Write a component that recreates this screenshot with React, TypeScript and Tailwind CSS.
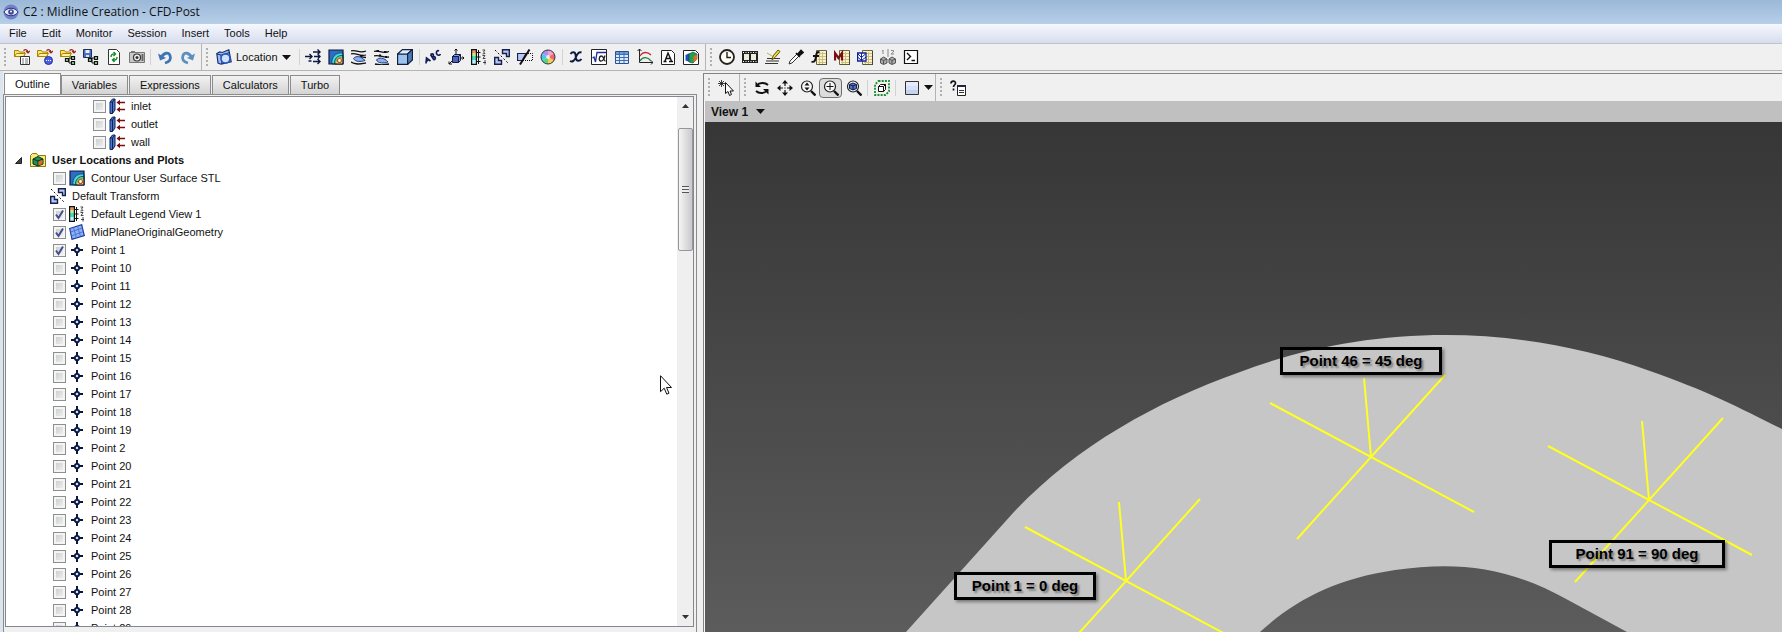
import type { ReactNode } from 'react';

type IconName = keyof typeof glyphs;

const folder = (
  <>
    <path d="M.5 7.500v-6h4l1 1.500h5v4.500z" fill="#ffe36b" stroke="#a88400" />
    <path d="M.5 7.500l2-3h9l-2 3z" fill="#fff2a0" stroke="#a88400" />
    <path d="M9.500 1.500c2-1.500 4-1 4.500 1.500M12 2l2 2 2-2" stroke="#a02020" strokeWidth="1.200" />
  </>
);

const tree = (
  <>
    <path d="M6 11.500h3M9 9v5h2M9 9h2" stroke="#111" />
    <path d="M5.500 9.500h3v3h-3zM11.500 7.500h3v3h-3zM11.500 12.500h3v3h-3z" fill="#8fce8f" stroke="#111" strokeWidth="1.200" />
  </>
);

const calcSheet = (
  <>
    <path d="M5.500 1.500h10v14h-10z" fill="#fbf3c4" stroke="#6b6440" />
    <path d="M7 4.500h8M7 7.500h8M7 10.500h8M7 13.500h8M8.500 3v12M11.500 3v12" stroke="#c9bc88" />
    <path d="M15.500 2v14H6" stroke="#4a4530" />
  </>
);

const lens = (
  <>
    <circle cx="7" cy="6.500" r="5.500" fill="#f8f8f8" stroke="#222" strokeWidth="1.200" />
    <path d="M11 11l4.500 4.500" stroke="#111" strokeWidth="2.400" />
  </>
);

const contour = (
  <>
    <path d="M1 1h14v14H1z" fill="#2f6cc4" />
    <path d="M4 15C3 8 8 3 15 4v11z" fill="#48d4e0" stroke="#0d3c5c" strokeWidth=".8" />
    <path d="M6.500 15C6 10 9.500 6 15 6.500V15z" fill="#58d890" stroke="#0d4030" strokeWidth=".8" />
    <path d="M8 15c-.5-4 2-6.500 7-6V15z" fill="#fbf3a8" stroke="#66600c" strokeWidth=".6" />
    <circle cx="11.500" cy="11.500" r="2" fill="#fff" stroke="#c85010" strokeWidth="1.200" />
    <path d="M1 1h14v14H1z" stroke="#0b1c40" strokeWidth="1.200" />
  </>
);

const transform = (
  <>
    <path d="M.7 8.500h3.800v3h3v3.800H.7zM8.500 .7h6.800v6.800h-2.800v-3h-4z" fill="#b9c7f2" stroke="#16204e" strokeWidth="1.400" />
    <path d="M1 1l14 14" stroke="#111" strokeDasharray="2 2" />
  </>
);

const legend = (
  <>
    <path d="M1 1h4v4H1z" fill="#f09070" />
    <path d="M1 4h4v3H1z" fill="#c8e890" />
    <path d="M1 7h4v4H1z" fill="#48dcb8" />
    <path d="M1 11h4v4H1z" fill="#b8f0ff" />
    <path d="M.6 .6h4.800v14.800H.6z" stroke="#111" strokeWidth="1.200" />
    <path d="M7.500 1v14M5.500 3.500h4M5.500 8h4M5.500 12.500h4" stroke="#111" />
    <path d="M11.500 1h2.500L12.500 3 14 4.500 11.500 5M11.500 6.500H14L12 9.500h2.500M14 11v4.500M12 13.500h3" stroke="#333" strokeWidth=".9" />
  </>
);

const glyphs = {
  loadState: (
    <>
      {folder}
      <path d="M6.500 7.500h9v8h-9z" fill="#fff" stroke="#333" />
      <path d="M8 10h2M11 10h3M8 12h2M11 12h3M8 14h2M11 14h3" stroke="#777" />
    </>
  ),
  loadResults: (
    <>
      {folder}
      <circle cx="11.500" cy="11.500" r="4" fill="#4b5de0" stroke="#2431a0" />
      <path d="M9 11.500h5" stroke="#fff" strokeDasharray="1 1" />
    </>
  ),
  loadTree: (
    <>
      {folder}
      {tree}
    </>
  ),
  saveTree: (
    <>
      <path d="M.5 .5h8v8h-8z" fill="#4f6fb8" stroke="#1c2f66" />
      <path d="M2.500 1h4v3h-4z" fill="#e8efff" />
      <path d="M3 6h3v2H3z" fill="#dde" />
      {tree}
    </>
  ),
  refresh: (
    <>
      <path d="M2.500 .5h8l3 3v12h-11z" fill="#fff" stroke="#333" />
      <path d="M5 8c0-2.500 2-3.500 4-3M7.500 3l2 2-2 2M11 8c0 2.500-2 3.500-4 3M8.500 9l-2 2 2 2" stroke="#138a20" strokeWidth="1.400" />
    </>
  ),
  camera: (
    <>
      <path d="M.5 3.500h15v10H.5z" fill="#c9c9c9" stroke="#777" />
      <path d="M2 2h4v1.500H2z" fill="#777" />
      <circle cx="8" cy="8.500" r="3.500" fill="#efefef" stroke="#333" strokeWidth="1.200" />
      <circle cx="8" cy="8.500" r="1.500" fill="#333" />
      <path d="M12.500 5h2v7h-2z" fill="#666" />
    </>
  ),
  undo: (
    <>
      <path d="M8 14c4.500-1 6.500-4 5-7.500S7 3.500 4.500 8" stroke="#3f74b5" strokeWidth="2.800" />
      <path d="M1 4.500L3 11.500l6-2.500z" fill="#3f74b5" />
    </>
  ),
  redo: (
    <>
      <path d="M8 14c-4.500-1-6.500-4-5-7.500S9 3.500 11.500 8" stroke="#5b8fbe" strokeWidth="2.800" />
      <path d="M15 4.500L13 11.500 7 9z" fill="#5b8fbe" />
    </>
  ),
  location: (
    <>
      <path d="M.8 4.500l3-1.500 2.500.5 6.500-2.700 2.400 12L5 15.200 2 14z" fill="#9dbcf2" stroke="#17306e" strokeWidth="1.200" />
      <path d="M1 5l4 1 9-2.500M5 6l1 9" stroke="#17306e" />
      <circle cx="9.500" cy="9.500" r="4.500" fill="#cfe2ff" stroke="#2a58c0" strokeWidth="1.600" />
    </>
  ),
  vector: (
    <path d="M0 7.500h6.500M4.500 5L7 7.500 4.500 10M8 3h7M12.500.5L15 3l-2.500 2.500M8 8h0M3.500 12h3M8 12.500h7M12.500 10l2.500 2.500-2.500 2.500M9 7.500h6M13 5.500l2 2-2 2" stroke="#0d1740" strokeWidth="1.400" />
  ),
  contour,
  streamline: (
    <>
      <path d="M2.500 9.500c2-3 8-2.500 11.500 2-4 1.500-10 1.500-11.500-2z" fill="#8fb0ee" stroke="#1e3c80" />
      <path d="M0 2c5-2 8 3 15 0M0 5c5-2 8 3 15 1M9 7c2 1 4 1.500 6 1.500M0 13c4 3 9 2 15 1" stroke="#111" strokeWidth="1.300" />
    </>
  ),
  particles: (
    <>
      <path d="M2.500 11c2-3 8-2.500 11.500 2-4 1.500-10 1.500-11.500-2z" fill="#8fb0ee" stroke="#1e3c80" />
      <path d="M0 2.500c5-2 8 3 15 0M0 7c5-2 8 2 15 1M1 15c4 1 9 1 14 0" stroke="#111" strokeWidth="1.300" />
      <path d="M2.500 1h2.500v2H2.500zM10 2h2.500v2H10zM5 5.500h2v2H5zM11 7h2v2h-2z" fill="#111" />
    </>
  ),
  cube: (
    <>
      <path d="M.6 5h10v10.400H.6z" fill="#9cc3f0" stroke="#14213d" strokeWidth="1.200" />
      <path d="M.6 5l4.800-4.400h10L10.600 5z" fill="#dcebff" stroke="#14213d" strokeWidth="1.200" />
      <path d="M10.600 5l4.800-4.400v10.400l-4.800 4.400z" fill="#4d7dbb" stroke="#14213d" strokeWidth="1.200" />
    </>
  ),
  text: (
    <path d="M1 14.500l.5-5.500 4 3M1.500 12.500l2.500-2M5.500 5.500l3.500 5.500M5.500 5.500c3-2 4 1 1.500 2.800 3-2 4.500 1 2 2.700M15.500 5c-1 2-3.500 1.500-4-.500S12.500 1 14 2" stroke="#101a58" strokeWidth="1.600" />
  ),
  coordFrame: (
    <>
      <path d="M8 5V0M12 9h4M4 12l-3 3M6.500 1.500L8 0l1.500 1.500M14.500 7.500L16 9l-1.500 1.500M1 12.500V15h3" stroke="#111" />
      <path d="M4.500 7.500h6v6h-6z" fill="#4d62b8" stroke="#111a4a" />
      <path d="M4.500 7.500l2-2h6l-2 2zM10.500 7.500l2-2v6l-2 2z" fill="#8b9be0" stroke="#111a4a" />
    </>
  ),
  legend,
  transform,
  clip: (
    <>
      <path d="M0.500 4.500h8.500l-3.500 7h-5z" fill="#b9c7f2" stroke="#16204e" strokeWidth="1.200" />
      <path d="M9 4.500h6.500v7H6" stroke="#111" strokeDasharray="1 1" />
      <path d="M3 15.500L12.500 .5" stroke="#111" strokeWidth="2" />
    </>
  ),
  colorWheel: (
    <>
      <path d="M8 8V1a7 7 0 0 1 6 3.500z" fill="#f5a0d0" />
      <path d="M8 8l6-3.500a7 7 0 0 1 0 7z" fill="#f06868" />
      <path d="M8 8l6 3.500A7 7 0 0 1 8 15z" fill="#f0d050" />
      <path d="M8 8v7a7 7 0 0 1-6-3.500z" fill="#60d080" />
      <path d="M8 8l-6 3.500a7 7 0 0 1 0-7z" fill="#48c8e8" />
      <path d="M8 8L2 4.500A7 7 0 0 1 8 1z" fill="#a890f0" />
      <circle cx="8" cy="8" r="7" stroke="#334" />
      <circle cx="8" cy="8" r="2" fill="#fff" fillOpacity=".7" />
    </>
  ),
  variable: (
    <path d="M2.500 5c1.500-2.500 4.500-2.500 5 .500l.5 4c.5 3 3.500 3 5.500.500M13.500 3.500C11 2.500 9.500 4.500 8 8s-3.500 5.500-6 4" stroke="#101a40" strokeWidth="1.900" />
  ),
  expression: (
    <>
      <path d="M.5 .5h15v15H.5z" fill="#fff" stroke="#222" />
      <path d="M1.500 9l1.500-1 1.500 5L6 3.500h9" stroke="#1a2fa0" strokeWidth="1.300" />
      <path d="M14 6.500c-1 4-2.500 6-4.500 5.500-2-.5-1.500-5 1-5s2 5 4 5" stroke="#222" strokeWidth="1.300" />
    </>
  ),
  table: (
    <>
      <path d="M1.500 2.500h13v12h-13z" fill="#dcecff" stroke="#2a4f8c" />
      <path d="M2 3h12v2H2z" fill="#6d9be0" />
      <path d="M1.500 5.500h13M1.500 8.500h13M1.500 11.500h13M5.500 3v11M10 3v11" stroke="#3f6db0" />
    </>
  ),
  chart: (
    <>
      <path d="M2.500 0v13.500H16M.5 2L2.500 0l2 2M14 11.500l2 2-2 2" stroke="#222" />
      <path d="M3 7c3-5 8-4 11-1" stroke="#c03030" strokeWidth="1.300" />
      <path d="M3 12c3-5 8-4 11 0" stroke="#208040" strokeWidth="1.300" />
    </>
  ),
  comment: (
    <>
      <path d="M1.500 1.500h10l3 3v11h-13z" fill="#fff" stroke="#222" />
      <path d="M3.500 12.500h3M9 12.500h4M5 12L8 4l3.500 8M6.500 9.500h4" stroke="#111" strokeWidth="1.400" />
    </>
  ),
  figure: (
    <>
      <path d="M.5 1.500h12l3 3v11H.5z" fill="#fff" stroke="#222" />
      <path d="M2.500 6l4-2v9l-4-1.500z" fill="#2050c0" />
      <path d="M6 5l4-2 4 2v5l-4 4-4-1z" fill="#20a050" stroke="#0c4028" strokeWidth=".6" />
      <path d="M10.500 7.500l3.500-2v5l-3.500 3z" fill="#e07020" />
    </>
  ),
  clock: (
    <>
      <circle cx="8" cy="8" r="7" fill="#fffff4" stroke="#222" strokeWidth="1.800" />
      <path d="M8 3v5.500h4" stroke="#222" strokeWidth="1.400" />
    </>
  ),
  film: (
    <>
      <path d="M0 2h16v12H0z" fill="#222" />
      <path d="M2 5h5v6H2zM9 5h5v6H9z" fill="#e8f0d8" />
      <path d="M1 3.500h15M1 12.500h15" stroke="#fff" strokeDasharray="1 1.500" />
    </>
  ),
  quickEdit: (
    <>
      <path d="M2 9.500h13M1 12h13M0 14.500h13" stroke="#333" strokeWidth="1.200" />
      <path d="M7 11l1-4 5-6 2 1.500-5 6z" fill="#f0d848" stroke="#665500" />
      <path d="M2 4l5 3" stroke="#b0b060" />
    </>
  ),
  dropper: (
    <>
      <path d="M1 15l1-3 7-7 2 2-7 7z" fill="#fff" stroke="#333" />
      <path d="M8 4l4 4M9.500 5.500L13 1.500l2 2L11 7z" fill="#111" stroke="#111" strokeWidth="1.600" />
    </>
  ),
  functionCalc: (
    <>
      {calcSheet}
      <path d="M8.500 3.500C6 2 5.500 4 5 7.500s-1.500 6.500-4.500 5M2 7h6" stroke="#111" strokeWidth="1.900" />
    </>
  ),
  macroCalc: (
    <>
      {calcSheet}
      <path d="M1 11.500V4l3.500 5L8 4v7.500" stroke="#7a0c14" strokeWidth="2.200" />
    </>
  ),
  meshCalc: (
    <>
      {calcSheet}
      <path d="M.6 4h8.400v8H.6z" fill="#fff" stroke="#1020a0" strokeWidth="1.300" />
      <path d="M.5 4.500l4 4 4.500-4M.5 8l4 3.500L9 8M4.500 4v8" stroke="#1020a0" />
    </>
  ),
  caseCompare: (
    <>
      <path d="M2 2l1-1v4M8 0v8M11 1.500h2.500V3L11 5h3" stroke="#888" />
      <path d="M.5 10l3-2 3.500 2v4l-3.500 1.500L.5 14zM9 10l3-2 3.500 2v4L12 15.500 9 14z" fill="#aaa" stroke="#555" />
      <path d="M.5 10l3 1.500L7 10M3.500 11.500V15M9 10l3 1.500 3.500-1.500M12 11.500V15" stroke="#555" />
    </>
  ),
  console: (
    <>
      <path d="M1.500 1.500h13v13h-13z" fill="#fff" stroke="#111" strokeWidth="1.200" />
      <path d="M4 4l3.500 3.500L4 11M8.500 11.500H12" stroke="#111" strokeWidth="1.400" />
    </>
  ),
  select: (
    <>
      <path d="M3.500 0v7M0 3.500h7M1 1l5 5M6 1L1 6" stroke="#111" strokeWidth=".8" />
      <path d="M7.500 2.500v11l2.500-2 1.500 4 2-1-1.500-3.500h3.500z" fill="#fff" stroke="#111" />
    </>
  ),
  rotate: (
    <>
      <path d="M3 5.500c2-3 8-3.500 11-.500M13 10.500c-2 3-8 3.500-11 .500" stroke="#111" strokeWidth="1.900" />
      <path d="M1.500 1.500v5.500h5.500zM14.500 14.500V9H9z" fill="#111" />
    </>
  ),
  pan: (
    <>
      <path d="M8 1v5M8 10v5M1 8h5M10 8h5M8 7.500v1" stroke="#111" strokeWidth="1.200" />
      <path d="M8 0l3 3.500H5zM8 16l3-3.500H5zM0 8l3.500-3v6zM16 8l-3.500-3v6z" fill="#111" />
    </>
  ),
  zoom: (
    <>
      {lens}
      <path d="M7 2.500L9.500 5.500h-5zM7 10.500L9.500 7.500h-5z" fill="#111" />
    </>
  ),
  zoomBox: (
    <>
      {lens}
      <path d="M7 3v7M3.500 6.500h7" stroke="#111" />
    </>
  ),
  fitView: (
    <>
      {lens}
      <path d="M3.500 4.500L7 3l3.500 1.500v4L7 10 3.500 8.500z" fill="#5570c0" stroke="#101c50" />
      <path d="M3.500 4.500L7 6l3.500-1.500M7 6v4" stroke="#101c50" />
    </>
  ),
  highlight: (
    <>
      <path d="M4.500 1h10.500v10.500L11.500 15H1V4.500z" stroke="#1a9030" strokeWidth="1.800" strokeDasharray="2 1.200" />
      <path d="M4.500 6.500h5v5h-5zM4.500 6.500l2-2h5l-2 2M11.500 4.500v5l-2 2" fill="#fff" stroke="#111" />
    </>
  ),
  viewport: (
    <>
      <path d="M1.500 1.500h13v13h-13z" fill="#e4ebfb" stroke="#333" />
      <path d="M2 6h12v4H2z" fill="#d6e0f8" />
      <path d="M2 10h12v4H2z" fill="#c4d2f2" />
    </>
  ),
  help: (
    <>
      <path d="M1 3.500c0-3 4.500-3 4.500-.500C5.500 5 3.500 5 3.500 7M3.500 8.500v2" stroke="#111" strokeWidth="1.700" />
      <path d="M7.500 5.500h8v10h-8z" fill="#fff" stroke="#222" />
      <path d="M7 5h9v2H7z" fill="#224" />
      <path d="M9 10.500h5M9 12.500h5" stroke="#333" />
    </>
  ),
  boundary: (
    <>
      <path d="M1 4l2.500-3H6v11l-2.500 3.500H1z" fill="#4d78cf" stroke="#0e2258" />
      <path d="M1 4h2.500L6 1M3.500 4v11.500" stroke="#0e2258" />
      <path d="M9 4.500h7M9 11.500h7" stroke="#7a1014" strokeWidth="1.300" />
      <path d="M7.500 4.500l3.500-2.800v5.600zM7.500 11.500l3.500-2.800v5.600z" fill="#7a1014" />
    </>
  ),
  userFolder: (
    <>
      <path d="M.5 14.500v-11l2-2h4l1.500 2h7.500v11z" fill="#f7ea7a" stroke="#8a7a10" />
      <path d="M3 7l5-2.500L13 7v5l-5 2-5-2z" fill="#1f9050" stroke="#0c3020" />
      <path d="M3 7l5 2 5-2M8 9v5" stroke="#0c3020" />
      <path d="M8.500 9.500l4-1.800v4l-4 1.800z" fill="#e06a20" />
    </>
  ),
  plane: (
    <>
      <path d="M.7 4.500l12-3.800 2.600 11L3 15.300z" fill="#8fb0f5" stroke="#1c3a98" strokeWidth="1.200" />
      <path d="M4.500 3.500l3 10.500M8.500 2l3 10.500M1.500 8l12-4M2.500 12l12-4.500" stroke="#4a74da" />
    </>
  ),
  point: (
    <>
      <path d="M8 2v12M2 8h12" stroke="#0a1840" strokeWidth="2" />
      <circle cx="8" cy="8" r="2.200" fill="#cfe0ff" stroke="#0a1840" strokeWidth="1.800" />
    </>
  ),
};

function Icon({ name }: { name: IconName }) {
  return (
    <svg className="size-4 shrink-0" viewBox="0 0 16 16" fill="none" aria-hidden="true">
      {glyphs[name]}
    </svg>
  );
}

function Caret() {
  return (
    <svg className="h-[5px] w-[9px] shrink-0" viewBox="0 0 9 5" aria-hidden="true">
      <path d="M0 0h9L4.500 5z" fill="#111" />
    </svg>
  );
}

function ToolButton({ name, active = false }: { name: IconName; active?: boolean }) {
  return (
    <button
      type="button"
      aria-label={name}
      className={
        active
          ? 'flex h-5 w-[23px] shrink-0 items-center justify-center rounded-sm border border-[#6e6e6e] bg-[#dcdcdc]'
          : 'flex h-5 w-[23px] shrink-0 items-center justify-center'
      }
    >
      <Icon name={name} />
    </button>
  );
}

function Tools({ names }: { names: IconName[] }) {
  return (
    <>
      {names.map((name) => (
        <ToolButton key={name} name={name} />
      ))}
    </>
  );
}

function Divider() {
  return <span className="mx-0.5 h-4 w-px shrink-0 bg-[#d2d2d2]" />;
}

function ToolGroup({ children, last = false }: { children: ReactNode; last?: boolean }) {
  return (
    <div className={last ? 'flex items-center pl-1' : 'flex items-center border-r border-[#b4b4b4] pr-0.5 pl-1'}>
      <span className="mr-1 h-[19px] w-0.5 shrink-0 bg-[repeating-linear-gradient(#b0b0b0_0_2px,transparent_2px_4px)]" />
      {children}
    </div>
  );
}

const menus = ['File', 'Edit', 'Monitor', 'Session', 'Insert', 'Tools', 'Help'];
const tabs = ['Outline', 'Variables', 'Expressions', 'Calculators', 'Turbo'];

const boundaries = ['inlet', 'outlet', 'wall'];

const pointNumbers = [1, 10, 11, 12, 13, 14, 15, 16, 17, 18, 19, 2, 20, 21, 22, 23, 24, 25, 26, 27, 28, 29];

function CheckRow({ icon, text, checked = false, deep = false }: { icon: IconName; text: string; checked?: boolean; deep?: boolean }) {
  return (
    <li className={deep ? 'flex h-[18px] pl-[87px]' : 'flex h-[18px] pl-[47px]'}>
      <label className="flex items-center">
        <span className="relative flex size-[13px]">
          <input
            type="checkbox"
            defaultChecked={checked}
            className="peer size-[13px] appearance-none border border-[#8e8f8f] bg-[linear-gradient(135deg,#c4c6c8,#f6f6f6)] shadow-[inset_0_0_0_2px_#f4f4f4]"
          />
          <svg className="pointer-events-none absolute inset-0 hidden peer-checked:block" viewBox="0 0 13 13" fill="none" aria-hidden="true">
            <path d="M3 6.500l2.500 3.500L10 2.500" stroke="#40508c" strokeWidth="2" />
          </svg>
        </span>
        <span className="ml-[3px] flex">
          <Icon name={icon} />
        </span>
        <span className="ml-1.5">{text}</span>
      </label>
    </li>
  );
}

function Outline() {
  return (
    <div className="relative flex min-h-0 flex-1 border border-[#828790] bg-white">
      <ul className="min-w-0 flex-1 overflow-hidden">
        {boundaries.map((name) => (
          <CheckRow key={name} icon="boundary" text={name} deep />
        ))}
        <li className="flex h-[18px] items-center pl-[9px] font-bold">
          <svg className="size-[7px]" viewBox="0 0 7 7" aria-hidden="true">
            <path d="M6.500 .5v6h-6z" fill="#444" stroke="#222" />
          </svg>
          <span className="mr-1.5 ml-2 flex">
            <Icon name="userFolder" />
          </span>
          User Locations and Plots
        </li>
        <CheckRow icon="contour" text="Contour User Surface STL" />
        <li className="flex h-[18px] items-center gap-1.5 pl-[44px]">
          <Icon name="transform" />
          Default Transform
        </li>
        <CheckRow icon="legend" text="Default Legend View 1" checked />
        <CheckRow icon="plane" text="MidPlaneOriginalGeometry" checked />
        {pointNumbers.map((n) => (
          <CheckRow key={n} icon="point" text={`Point ${n}`} checked={n === 1} />
        ))}
      </ul>

      <div className="flex w-4 flex-col items-center bg-[#efefef]">
        <svg className="my-[7px] h-1 w-[7px]" viewBox="0 0 7 4" aria-hidden="true">
          <path d="M0 4L3.500 0 7 4z" fill="#333" />
        </svg>
        <div className="mt-[13px] flex h-[123px] w-[15px] items-center justify-center rounded-xs border border-[#979797] bg-linear-to-r from-[#f5f5f5] to-[#c9c9cc]">
          <span className="h-[7px] w-[7px] bg-[repeating-linear-gradient(#555_0_1px,#eee_1px_3px)]" />
        </div>
        <svg className="mt-auto mb-[7px] h-1 w-[7px]" viewBox="0 0 7 4" aria-hidden="true">
          <path d="M0 0L3.500 4 7 0z" fill="#333" />
        </svg>
      </div>

      {/* mouse pointer */}
      <svg className="absolute top-[278px] left-[654px] h-[20px] w-[12px]" viewBox="0 0 12 20" aria-hidden="true">
        <path d="M.5 .7v16l3.700-3.500 2.600 6 2.200-1-2.500-5.700h5z" fill="#fff" stroke="#111" />
      </svg>
    </div>
  );
}

// axis strokes of one point marker, relative to its centre
const markerPath = 'M-101-54L103 55M74-82L-74 82M-7-79L0 0';

const markers = [
  { x: 421, y: 459 },
  { x: 666, y: 335 },
  { x: 944, y: 378 },
];

function Callout({ text, place }: { text: string; place: string }) {
  return (
    <div className={`absolute flex h-[28px] items-center justify-center border-3 border-black text-[15px] font-bold text-black shadow-[2px_2px_3px_#0006] text-shadow-[2px_2px_2px_#0006] ${place}`}>
      {text}
    </div>
  );
}

function Viewport() {
  return (
    <div className="relative min-h-0 flex-1 overflow-hidden bg-linear-to-b from-[#363636] to-[#5c5c5c]">
      <svg className="absolute top-0 left-0 h-[510px] w-[1077px]" viewBox="0 0 1077 510" fill="none" aria-hidden="true">
        <path
          d="M201 510L308 391C370 325 450 280 535 250C650 206 800 196 945 249C1000 268 1035 286 1077 307V510H922L863 478C800 443 750 440 690 448C630 457 590 478 555 510z"
          fill="#c6c6c6"
        />
        {markers.map((m) => (
          <path key={m.x} d={markerPath} transform={`translate(${m.x} ${m.y})`} stroke="#ffff20" strokeWidth="2" />
        ))}
      </svg>
      <Callout text="Point 46 = 45 deg" place="top-[225px] left-[575px] w-[162px]" />
      <Callout text="Point 91 = 90 deg" place="top-[418px] left-[844px] w-[176px]" />
      <Callout text="Point 1 = 0 deg" place="top-[450px] left-[249px] w-[142px]" />
    </div>
  );
}

export default function App() {
  return (
    <div className="flex h-screen flex-col overflow-hidden bg-[#f0f0f0] font-['Liberation_Sans',Arial,sans-serif] text-[11px] text-[#111]">
      <header className="flex h-6 shrink-0 items-center gap-1 bg-linear-to-b from-[#9bb8d8] to-[#b7cfe8] pl-[3px]">
        <svg className="size-4" viewBox="0 0 16 16" fill="none" aria-hidden="true">
          <circle cx="8" cy="8" r="7.500" fill="#7180c8" />
          <path d="M1 8c3-5 11-5 14 0-3 5-11 5-14 0z" fill="#e8ecff" stroke="#2c3478" />
          <circle cx="8" cy="8" r="2.800" fill="#3c4698" />
          <circle cx="8" cy="7.500" r="1" fill="#fff" />
        </svg>
        <h1 className="font-['Open_Sans','Noto_Sans',sans-serif] text-[12px]">C2 : Midline Creation - CFD-Post</h1>
      </header>

      <nav className="flex h-5 shrink-0 items-center gap-[15px] border-b border-[#c0c4cc] bg-linear-to-b from-[#f6f8fd] to-[#d7ddee] pl-[9px]">
        {menus.map((item) => (
          <button key={item} type="button">{item}</button>
        ))}
      </nav>

      <div className="flex h-[27px] shrink-0 border-b border-[#b4b4b4] bg-[#f0f0f0]">
        <ToolGroup>
          <Tools names={['loadState', 'loadResults', 'loadTree', 'saveTree', 'refresh', 'camera']} />
          <Divider />
          <Tools names={['undo', 'redo']} />
        </ToolGroup>
        <ToolGroup>
          <button type="button" className="mr-1.5 ml-1 flex items-center gap-1">
            <Icon name="location" />
            Location
            <Caret />
          </button>
          <Divider />
          <Tools names={['vector', 'contour', 'streamline', 'particles', 'cube']} />
          <Divider />
          <Tools names={['text', 'coordFrame', 'legend', 'transform', 'clip', 'colorWheel']} />
          <Divider />
          <Tools names={['variable', 'expression', 'table', 'chart', 'comment', 'figure']} />
        </ToolGroup>
        <ToolGroup last>
          <Tools names={['clock', 'film', 'quickEdit', 'dropper', 'functionCalc', 'macroCalc', 'meshCalc', 'caseCompare', 'console']} />
        </ToolGroup>
      </div>

      <main className="flex min-h-0 flex-1 border-l-3 border-[#dce4ee] pt-0.5">
        <section className="flex w-[694px] shrink-0 flex-col">
          <div className="flex h-[21px] items-end pl-px" role="tablist">
            {tabs.map((tab, i) => (
              <button
                key={tab}
                type="button"
                role="tab"
                aria-selected={i === 0}
                className={
                  i === 0
                    ? 'h-[21px] border-x border-t border-[#8c8c8c] bg-white px-2.5'
                    : 'mr-px h-[19px] border-x border-t border-[#8c8c8c] bg-linear-to-b from-[#f2f2f2] to-[#d4d4d4] px-2.5'
                }
              >
                {tab}
              </button>
            ))}
          </div>
          <div className="flex min-h-0 flex-1 flex-col border-t border-r border-l border-[#8c8c8c] bg-[#f0f0f0] pt-px pr-0.5 pb-[5px] pl-px">
            <Outline />
          </div>
        </section>

        <section className="ml-1.5 flex min-w-0 flex-1 flex-col border-t border-l border-[#828282]">
          <div className="flex h-[27px] shrink-0 bg-[#f0f0f0]">
            <ToolGroup>
              <ToolButton name="select" />
            </ToolGroup>
            <ToolGroup>
              <Tools names={['rotate', 'pan', 'zoom']} />
              <ToolButton name="zoomBox" active />
              <ToolButton name="fitView" />
              <Divider />
              <ToolButton name="highlight" />
              <Divider />
              <button type="button" aria-label="viewport layout" className="flex items-center gap-1 pl-1.5">
                <Icon name="viewport" />
                <Caret />
              </button>
            </ToolGroup>
            <ToolGroup last>
              <ToolButton name="help" />
            </ToolGroup>
          </div>
          <div className="flex min-h-0 flex-1 flex-col border-l border-[#f8f8f8]">
            <button type="button" className="flex h-[21px] shrink-0 items-center gap-2 bg-[#c0c0c0] pl-1.5 text-[12px] font-bold">
              View 1
              <Caret />
            </button>
            <Viewport />
          </div>
        </section>
      </main>
    </div>
  );
}
